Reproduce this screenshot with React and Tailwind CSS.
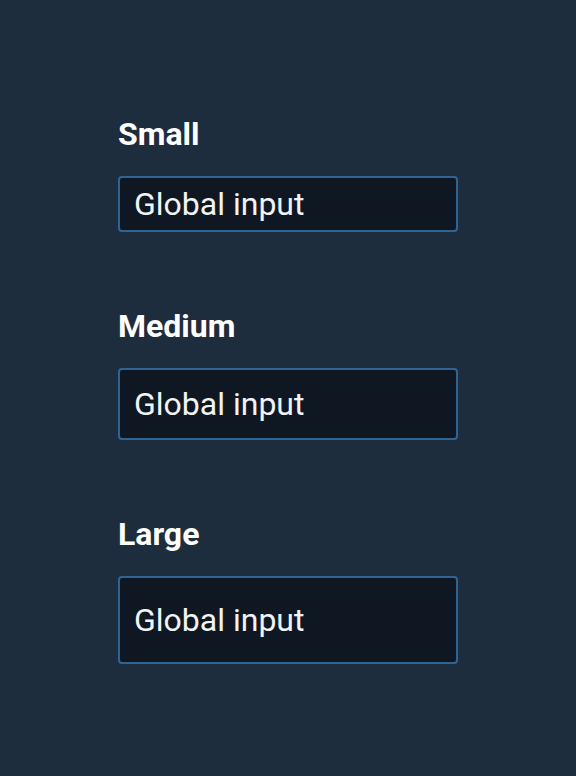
export default function App() {
  const items = [
    { label: "Small", h: "h-[56px]" },
    { label: "Medium", h: "h-[72px]" },
    { label: "Large", h: "h-[88px]" },
  ];
  return (
    <div
      className="w-[576px] h-[776px] bg-[#1e2d3d] pl-[118px] pt-[114px]"
      style={{ fontFamily: "Roboto, 'Noto Sans', sans-serif" }}
    >
      <div className="flex flex-col gap-[74px]">
        {items.map((it) => (
          <div key={it.label} className="flex flex-col gap-[22px]">
            <div className="text-[32px] leading-[40px] font-bold text-white">{it.label}</div>
            <input
              readOnly
              defaultValue="Global input"
              className={`w-[340px] ${it.h} rounded-[4px] border-2 border-[#2f6394] bg-[#0f1822] px-[14px] text-[32px] text-[#f1f3f5] outline-none`}
            />
          </div>
        ))}
      </div>
    </div>
  );
}
